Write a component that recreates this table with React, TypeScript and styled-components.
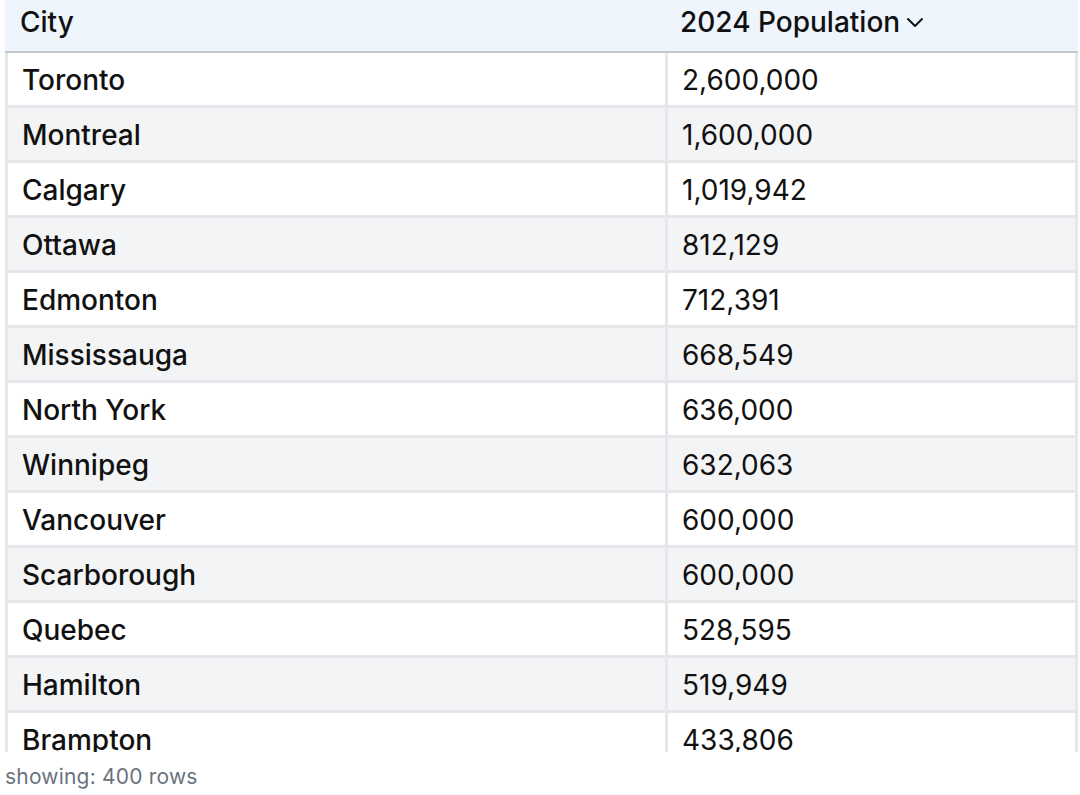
import React from "react";
import styled, { createGlobalStyle } from "styled-components";

const Global = createGlobalStyle`
  html, body { margin: 0; padding: 0; background: #ffffff; }
  body { font-family: Inter, "Noto Sans", "Liberation Sans", sans-serif; color: #111111; }
`;

const Page = styled.div`
  padding-left: 5px;
  width: 1073px;
`;

const TableClip = styled.div`
  height: 752px;
  overflow: hidden;
`;

const Table = styled.table`
  width: 1073px;
  border-collapse: separate;
  border-spacing: 0;
  table-layout: fixed;
`;

const HeadCell = styled.th`
  height: 53px;
  box-sizing: border-box;
  padding: 0 14px 8px 15px;
  background: #eef5fd;
  border-bottom: 2px solid #c3c8cf;
  text-align: left;
  font-size: 28px;
  font-weight: 500;
  color: #111111;
  vertical-align: middle;
  white-space: nowrap;
`;

const HeadLabel = styled.span`
  display: inline-flex;
  align-items: center;
  gap: 5px;
`;

const Row = styled.tr<{ $alt: boolean }>`
  background: ${(p) => (p.$alt ? "#f3f4f6" : "#ffffff")};
`;

const Cell = styled.td<{ $first?: boolean; $name?: boolean }>`
  height: 55px;
  box-sizing: border-box;
  padding: 1px 14px 0 14px;
  border-bottom: 3px solid #e5e7eb;
  border-left: 3px solid #e5e7eb;
  ${(p) => (p.$first ? "" : "border-right: 3px solid #e5e7eb;")}
  font-size: 28px;
  font-weight: ${(p) => (p.$name ? 500 : 400)};
  color: #111111;
  vertical-align: middle;
  white-space: nowrap;
`;

const Footer = styled.div`
  margin-top: 12px;
  font-size: 21px;
  color: #6b7280;
  letter-spacing: 0.2px;
`;

const rows: [string, string][] = [
  ["Toronto", "2,600,000"],
  ["Montreal", "1,600,000"],
  ["Calgary", "1,019,942"],
  ["Ottawa", "812,129"],
  ["Edmonton", "712,391"],
  ["Mississauga", "668,549"],
  ["North York", "636,000"],
  ["Winnipeg", "632,063"],
  ["Vancouver", "600,000"],
  ["Scarborough", "600,000"],
  ["Quebec", "528,595"],
  ["Hamilton", "519,949"],
  ["Brampton", "433,806"],
];

const Chevron = () => (
  <svg width="20" height="20" viewBox="0 0 20 20" fill="none" stroke="#111" strokeWidth="2" strokeLinecap="round" strokeLinejoin="round">
    <path d="M3 7l7 7 7-7" />
  </svg>
);

export default function App() {
  return (
    <Page>
      <Global />
      <TableClip>
        <Table>
          <colgroup>
            <col style={{ width: 660 }} />
            <col />
          </colgroup>
          <thead>
            <tr>
              <HeadCell>City</HeadCell>
              <HeadCell>
                <HeadLabel>
                  2024 Population <Chevron />
                </HeadLabel>
              </HeadCell>
            </tr>
          </thead>
          <tbody>
            {rows.map(([city, pop], i) => (
              <Row key={city} $alt={i % 2 === 1}>
                <Cell $first $name>{city}</Cell>
                <Cell>{pop}</Cell>
              </Row>
            ))}
          </tbody>
        </Table>
      </TableClip>
      <Footer>showing: 400 rows</Footer>
    </Page>
  );
}
